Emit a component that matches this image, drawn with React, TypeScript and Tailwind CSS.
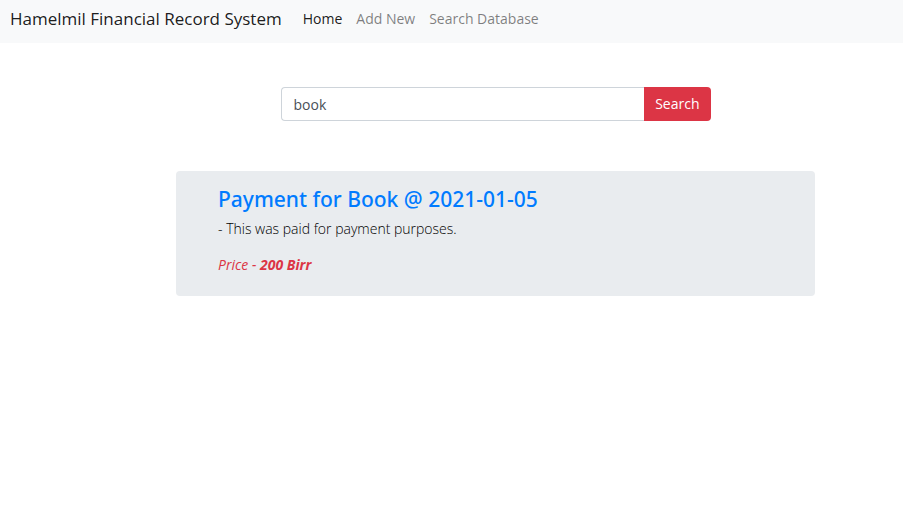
import React, { useState } from "react";

const links = [
  { label: "Home", active: true },
  { label: "Add New", active: false },
  { label: "Search Database", active: false },
];

export default function App() {
  const [query, setQuery] = useState("book");

  return (
    <div className="min-h-screen bg-white font-['Open_Sans','Noto_Sans',sans-serif] text-sm text-[#212529]">
      <nav className="flex items-center bg-[#f8f9fa] px-2.5 pt-[7px] pb-3">
        <a href="#" className="mr-[21px] text-[17px] leading-6 text-black/90">
          Hamelmil Financial Record System
        </a>
        <ul className="flex gap-3.5">
          {links.map((link) => (
            <li key={link.label}>
              <a href="#" className={link.active ? "text-black/90" : "text-black/50"}>
                {link.label}
              </a>
            </li>
          ))}
        </ul>
      </nav>

      <main className="pt-11 pr-[88px] pl-44">
        <form
          className="mx-auto flex w-full max-w-[430px]"
          onSubmit={(event) => event.preventDefault()}
        >
          <input
            type="text"
            aria-label="Search records"
            value={query}
            onChange={(event) => setQuery(event.target.value)}
            className="h-[34px] min-w-0 flex-1 rounded-l border border-r-0 border-[#ced4da] px-3 text-[#495057] outline-none"
          />
          <button type="submit" className="rounded-r bg-[#dc3545] px-[11px] font-normal text-white">
            Search
          </button>
        </form>

        <article className="mt-[50px] rounded bg-[#e9ecef] px-[42px] pt-4 pb-[21px]">
          <h2 className="font-['Noto_Sans','Open_Sans',sans-serif] text-[21px] leading-6 font-medium text-[#007bff]">
            <a href="#">Payment for Book @ 2021-01-05</a>
          </h2>
          <p className="mt-2 font-light text-black">- This was paid for payment purposes.</p>
          <p className="mt-4 text-[#dc3545] italic">
            Price - <strong className="font-bold">200 Birr</strong>
          </p>
        </article>
      </main>
    </div>
  );
}
